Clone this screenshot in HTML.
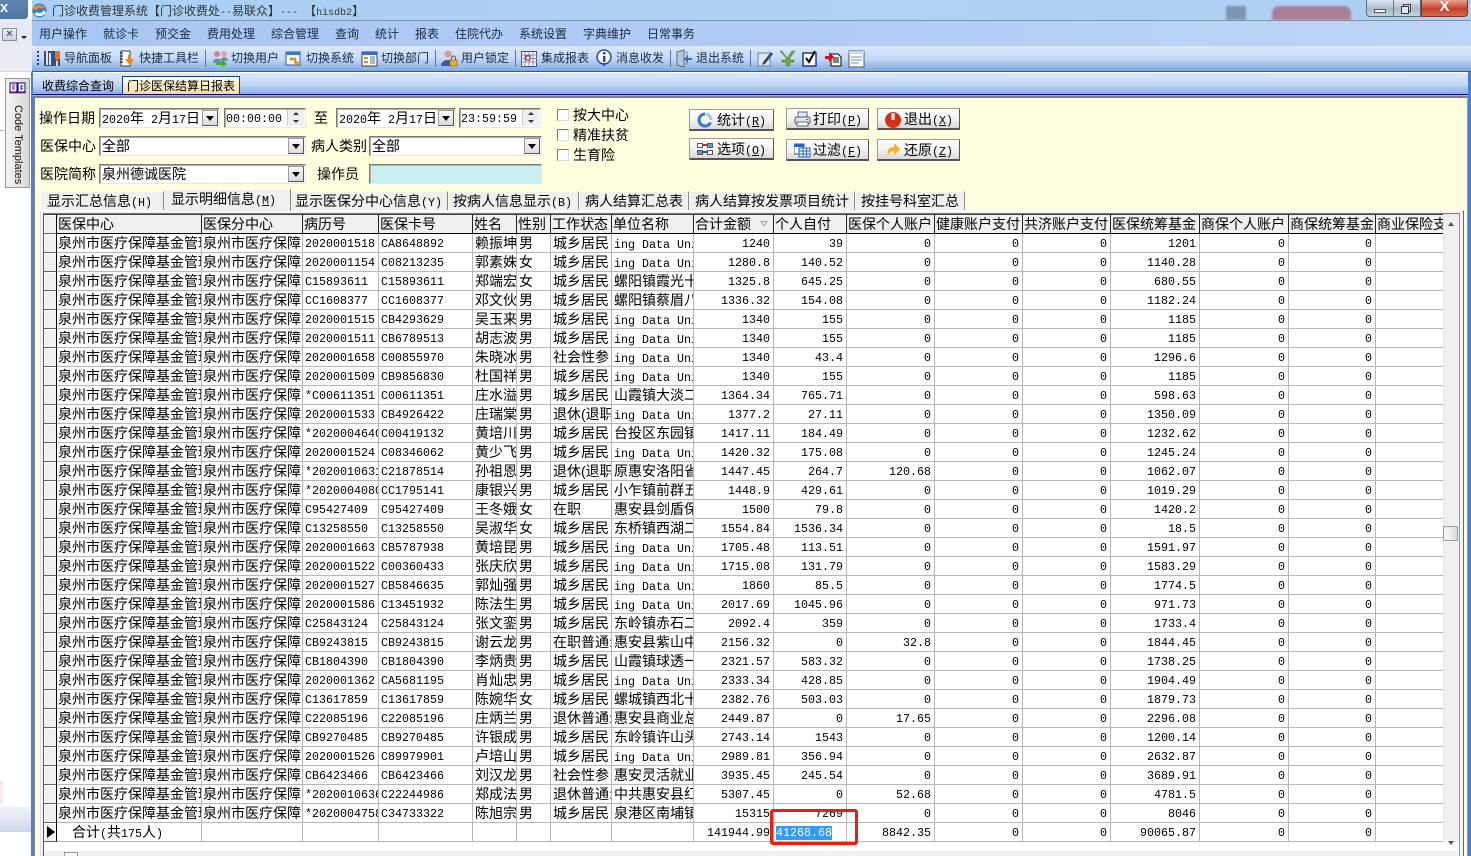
<!DOCTYPE html>
<html lang="zh"><head><meta charset="utf-8"><title>门诊收费管理系统</title>
<style>
*{box-sizing:border-box}
html,body{margin:0;padding:0;width:1471px;height:856px;overflow:hidden;background:#fff}
body{position:relative;font-family:"Liberation Sans","WenQuanYi Zen Hei","Noto Sans CJK SC",sans-serif;font-size:14px;color:#000}
.a{position:absolute}
.t{position:absolute;white-space:nowrap;line-height:20px;height:20px}
.m{font-family:"Liberation Mono",monospace;font-size:11.67px}
.s{font-size:12px;color:#1a2a44}
.f{position:absolute;background:#fff;border:1px solid #7a7a7a;border-right-color:#e8e8e0;border-bottom-color:#e8e8e0;box-shadow:inset 1px 1px 0 #b0b0b0;height:20px;line-height:18px;padding-left:2px;white-space:nowrap;overflow:hidden}
.dd{position:absolute;top:1px;right:1px;width:16px;height:16px;background:linear-gradient(#fafafa,#dcdcdc);border:1px solid #999;border-right-color:#555;border-bottom-color:#555}
.dd:after{content:"";position:absolute;left:3px;top:5px;border:4px solid transparent;border-top:5px solid #000;border-bottom:0}
.sp{position:absolute;top:1px;right:1px;width:17px;height:16px;background:#f0f0f0;border-left:1px solid #ccc}
.sp:before{content:"";position:absolute;left:5px;top:2px;border:3px solid transparent;border-bottom:3px solid #333;border-top:0}
.sp:after{content:"";position:absolute;left:5px;top:10px;border:3px solid transparent;border-top:3px solid #333;border-bottom:0}
.cb{position:absolute;left:557px;width:12px;height:12px;background:#fff;border:1px solid #777;border-right-color:#ddd;border-bottom-color:#ddd}
.b{position:absolute;height:22px;background:linear-gradient(#fff,#f2f2f2 55%,#d8d8d8);border:1px solid #999;border-right:1px solid #555;border-bottom:2px solid #555;border-radius:1px;line-height:20px;white-space:nowrap}
.b span.l{position:absolute;top:0}
.b svg{position:absolute;left:7px;top:2px}
.tab{position:absolute;top:191px;height:19px;background:#f0f0f0;border-top:1px solid #fff;border-right:1px solid #888;line-height:18px;padding-left:5px;white-space:nowrap}
table{position:absolute;left:44px;top:214px;border-collapse:separate;border-spacing:0;table-layout:fixed;width:1400px;background:#fff}
td,th{padding:0 0 0 2px;overflow:hidden;white-space:nowrap;height:19px;line-height:18px;font-weight:400;text-align:left;border-right:1px solid #b8b8b8;border-bottom:1px solid #b8b8b8;font-size:14px;vertical-align:top}
th{height:20px;background:#f0f0f0;border-right:1px solid #222;border-top:1px solid #444;border-bottom:1px solid #000;padding-left:1px}
td:first-child,th:first-child{background:#f0f0f0;border-right:1px solid #000;border-bottom:1px solid #666;box-shadow:inset 1px 1px 0 #fff;padding:0}
td:nth-child(4),td:nth-child(5){font-family:"Liberation Mono",monospace;font-size:11.67px;line-height:16px;padding-top:2px}
td:nth-child(n+10){font-family:"Liberation Mono",monospace;font-size:11.67px;text-align:right;line-height:16px;padding:2px 3px 0 0}
td i,td .m,td .sel{font-style:normal;font-family:"Liberation Mono",monospace;font-size:11.67px;line-height:0}
td:nth-child(2){padding-left:1px}td:nth-child(3){padding-left:1px}
</style></head><body>
<!-- title bar -->
<div class="a" style="left:32px;top:0;width:1439px;height:21px;background:linear-gradient(90deg,#a9cff3,#b0d2f4 60%,#acd0f2);border-bottom:1px solid #7e93ad"></div>
<div class="a" style="left:0;top:0;width:28px;height:19px;background:linear-gradient(#5f86ae,#4d76a0);border-bottom-right-radius:3px"></div>
<div class="a" style="left:0;top:-1px;font:700 15px 'Liberation Sans';color:#e8f0f8;line-height:18px">x</div>
<svg class="a" style="left:32px;top:3px" width="15" height="15" viewBox="0 0 15 15"><circle cx="7.5" cy="7.5" r="7" fill="#2f7fc9"/><path d="M1 5C4 1 10 1 13 4L10 6C8 4 5 5 3 8Z" fill="#f08a1d"/><path d="M14 10C11 14 5 14 2 11L5 9C7 11 10 10 12 7Z" fill="#f5f5f5"/></svg>
<div class="t s" style="left:52px;top:1px;color:#333">门诊收费管理系统【门诊收费处<span class="m" style="font-size:10px">--</span>易联众】<span class="m" style="font-size:10px">--- </span>【<span class="m" style="font-size:10px">hisdb2</span>】</div>
<div class="a" style="left:1226px;top:6px;width:20px;height:14px;background:#7a96b2;filter:blur(1px)"></div>
<div class="a" style="left:1272px;top:6px;width:79px;height:14px;background:#a87f96;border-radius:7px 7px 0 0;filter:blur(1px)"></div>
<div class="a" style="left:1366px;top:0;width:55px;height:17px;background:linear-gradient(#dfe9f3,#aab9c9 55%,#c6d3df);border:1px solid #5a6a7a;border-top:0;border-radius:0 0 0 4px"></div>
<div class="a" style="left:1393px;top:0;width:1px;height:17px;background:#66788a"></div>
<div class="a" style="left:1374px;top:9px;width:12px;height:4px;background:#fff;border:1px solid #556"></div>
<div class="a" style="left:1403px;top:4px;width:8px;height:8px;border:1px solid #334;background:#cfd9e3"></div>
<div class="a" style="left:1401px;top:6px;width:8px;height:8px;border:1px solid #334;background:#dfe7ef"></div>
<div class="a" style="left:1421px;top:0;width:47px;height:17px;background:linear-gradient(#e8a090,#c8402a 55%,#d06a50);border:1px solid #6a3a30;border-top:0;border-radius:0 0 4px 0"></div>
<div class="a" style="left:1421px;top:-2px;width:47px;text-align:center;font:700 15px/18px 'Liberation Sans';color:#fff">X</div>
<!-- left dock -->
<div class="a" style="left:0;top:19px;width:32px;height:26px;background:#e9e9f1"></div>
<div class="a" style="left:2px;top:28px;width:15px;height:13px;background:linear-gradient(#e8eef6,#c8d2de);border:1px solid #8a9098;text-align:center;font:700 11px/11px 'Liberation Sans';color:#556">×</div>
<div class="a" style="left:21px;top:36px;border:3px solid transparent;border-top:3px solid #222"></div>
<div class="a" style="left:0;top:45px;width:32px;height:27px;background:#ececf4;border-bottom:1px solid #d8d8e0"></div>
<div class="a" style="left:0;top:130px;width:4px;height:1px;background:#aaa"></div>
<div class="a" style="left:5px;top:78px;width:25px;height:110px;background:linear-gradient(90deg,#f4f4f4,#d8d8d8);border:1px solid #9a9a9a"></div>
<svg class="a" style="left:9px;top:82px" width="17" height="12" viewBox="0 0 17 12"><rect x="1" y="1" width="7" height="9" fill="#fff" stroke="#000080"/><rect x="9" y="1" width="7" height="9" fill="#fff" stroke="#000080"/><path d="M3 3h3M3 5h3M3 7h3" stroke="#800080"/><path d="M14 4h-2v3h2" stroke="#0000c0" fill="none"/><path d="M0 11h17" stroke="#c04040"/></svg>
<div class="a" style="left:8px;top:100px;width:18px;height:84px;font:11px/16px 'Liberation Sans';writing-mode:vertical-rl;color:#111;white-space:nowrap;padding-top:5px">Code Templates</div>
<div class="a" style="left:0;top:781px;width:3px;height:23px;background:#f6eeee"></div>
<div class="a" style="left:0;top:806px;width:31px;height:26px;background:linear-gradient(#f6f6fa,#d0d6ea)"></div>
<!-- menu -->
<div class="a" style="left:32px;top:21px;width:1439px;height:25px;background:linear-gradient(90deg,#a9c6f2,#b4cdf5 60%,#bdd5f6)"></div>
<div class="t s" style="left:39px;top:24px">用户操作</div><div class="t s" style="left:103px;top:24px">就诊卡</div><div class="t s" style="left:155px;top:24px">预交金</div><div class="t s" style="left:207px;top:24px">费用处理</div><div class="t s" style="left:271px;top:24px">综合管理</div><div class="t s" style="left:335px;top:24px">查询</div><div class="t s" style="left:375px;top:24px">统计</div><div class="t s" style="left:415px;top:24px">报表</div><div class="t s" style="left:455px;top:24px">住院代办</div><div class="t s" style="left:519px;top:24px">系统设置</div><div class="t s" style="left:583px;top:24px">字典维护</div><div class="t s" style="left:647px;top:24px">日常事务</div>
<!-- toolbar -->
<div class="a" style="left:32px;top:46px;width:1439px;height:26px;background:linear-gradient(#dce9fd,#c5d9f8 50%,#7fa8e0);border-bottom:1px solid #2e5c9c;border-radius:4px 0 0 0"></div>
<div class="a" style="left:37px;top:51px;width:2px;height:16px;background:repeating-linear-gradient(#1f3f7f 0 2px,transparent 2px 4px)"></div>
<div class="t s" style="left:64px;top:48px">导航面板</div><div class="t s" style="left:139px;top:48px">快捷工具栏</div><div class="t s" style="left:231px;top:48px">切换用户</div><div class="t s" style="left:306px;top:48px">切换系统</div><div class="t s" style="left:381px;top:48px">切换部门</div><div class="t s" style="left:461px;top:48px">用户锁定</div><div class="t s" style="left:541px;top:48px">集成报表</div><div class="t s" style="left:616px;top:48px">消息收发</div><div class="t s" style="left:696px;top:48px">退出系统</div>
<div class="a" style="left:205px;top:50px;width:1px;height:17px;background:#557aa8"></div><div class="a" style="left:435px;top:50px;width:1px;height:17px;background:#557aa8"></div><div class="a" style="left:515px;top:50px;width:1px;height:17px;background:#557aa8"></div><div class="a" style="left:670px;top:50px;width:1px;height:17px;background:#557aa8"></div><div class="a" style="left:750px;top:50px;width:1px;height:17px;background:#557aa8"></div>
<svg class="a" style="left:0;top:0" width="900" height="72">
<g transform="translate(44,50)"><rect x="0" y="1" width="16" height="15" fill="#35507f"/><path d="M3 1v14M6 3v12" stroke="#dfe6f2" stroke-width="2"/><path d="M11 1h5v7l-2 3h-1l-2-3z" fill="#f06a20"/><rect x="12" y="11" width="2" height="5" fill="#d0d8e4"/></g>
<g transform="translate(119,50)"><rect x="2" y="1" width="9" height="15" fill="#fff" stroke="#345"/><path d="M1 3h3M1 6h3M1 9h3M1 12h3" stroke="#111" stroke-width="1"/><path d="M9 5h3v4h3l-4 6-5-6h3z" fill="#ef7f1a"/></g>
<g transform="translate(212,50)"><circle cx="5" cy="4" r="3" fill="#c98b7a"/><circle cx="12" cy="4" r="3" fill="#e0a8a0"/><path d="M1 13c0-6 8-6 8 0zM8 11c1-5 8-5 8 0z" fill="#6c88bc"/><path d="M4 12h6v-3l5 5-5 3v-2H4z" fill="#3fae2a"/></g>
<g transform="translate(286,51)"><rect x="0" y="1" width="14" height="13" fill="#fff" stroke="#2a5ca8"/><rect x="0" y="1" width="14" height="3" fill="#3a78d0"/><path d="M4 7h6v4h3l-2 4-3-4h1V9H4z" fill="#f4a21f" stroke="#a06010" stroke-width=".5"/></g>
<g transform="translate(361,50)"><rect x="1" y="2" width="15" height="14" fill="#fff" stroke="#345"/><rect x="1" y="2" width="15" height="3" fill="#3a68b0"/><path d="M3 7h4v2H3zM3 11h4v2H3z" fill="#e88a20"/><path d="M9 7h5M9 9h5M9 11h5M9 13h5" stroke="#5070a0"/></g>
<g transform="translate(441,50)"><circle cx="7" cy="4" r="3.5" fill="#d8a080"/><path d="M0 16c0-8 13-8 13 0z" fill="#3c5aa0"/><rect x="9" y="10" width="7" height="6" fill="#e8b030" stroke="#806010" stroke-width=".6"/><path d="M10.500 10V8a2 2 0 014 0v2" fill="none" stroke="#555"/></g>
<g transform="translate(521,50)" fill="none"><rect x="0.500" y="1.500" width="15" height="15" fill="#fff" stroke="#3a4fa0"/><path d="M0 5h16M0 8.500h16M0 12h16M4 2v14M8 2v14M12 2v14" stroke="#7f86c8"/><rect x="5" y="6" width="4" height="4" fill="#fff" stroke="#a01010"/></g>
<g transform="translate(596,49)"><circle cx="8" cy="8" r="7" fill="#fff" stroke="#1f4fa8" stroke-width="1.500"/><path d="M6 14l2 4 2-4z" fill="#1f4fa8"/><rect x="7" y="3" width="2.500" height="2.500" fill="#1f4fa8"/><rect x="7" y="7" width="2.500" height="6" fill="#1f4fa8"/></g>
<g transform="translate(676,50)"><path d="M1 2l7-2v17l-7-2z" fill="#b8c6dc" stroke="#5a6a8a"/><path d="M9 2h2v12H9" fill="none" stroke="#889"/><path d="M16 8h-4V5l-4 4 4 4v-3h4z" fill="#1f78d8"/></g>
<g transform="translate(757,50)"><path d="M1 3h12v13H1z" fill="#e0e8f2" stroke="#6a80a0"/><path d="M6 12l8-10 2 2-8 10-3 1z" fill="#344a70"/></g>
<g transform="translate(780,50)"><path d="M2 1l5 7 5-7h3l-5 7v2h4v2h-4v4H6v-4H2v-2h4V8L0 1z" fill="#6fa838" stroke="#4a7a20" stroke-width=".5"/></g>
<g transform="translate(802,50)"><rect x="1" y="3" width="13" height="13" fill="#fff" stroke="#1a3a8a" stroke-width="1.500"/><path d="M4 8l3 4 6-11" fill="none" stroke="#000" stroke-width="2"/></g>
<g transform="translate(825,50)"><path d="M6 4h7l3 3v9H6z" fill="#fff" stroke="#000"/><path d="M8 8h6M8 10h6M8 12h6" stroke="#000"/><path d="M0 6h4V2l5 5-5 5V9H0z" fill="#e80808"/></g>
<g transform="translate(848,50)"><rect x="1" y="1" width="15" height="16" fill="#fff" stroke="#556"/><rect x="1" y="1" width="15" height="3" fill="#cfd6e6"/><path d="M3 7h11M3 10h11M3 13h8" stroke="#7a88c0"/></g>
</svg>
<!-- tab bar -->
<div class="a" style="left:32px;top:73px;width:1436px;height:22px;background:linear-gradient(#dce9fd,#c5d9f8 50%,#7fa8e0)"></div>
<div class="t" style="left:42px;top:76px;font-size:12px;line-height:20px">收费综合查询</div>
<div class="a" style="left:122px;top:76px;width:118px;height:19px;background:linear-gradient(#fffdf0,#fbd79a);border:1px solid #1f3f7f;border-bottom:0;text-align:center;font-size:12px;line-height:19px;white-space:nowrap">门诊医保结算日报表</div>
<div class="a" style="left:32px;top:94px;width:1436px;height:1px;background:#0000a0"></div>
<div class="a" style="left:32px;top:95px;width:1436px;height:1px;background:#f5b050"></div>
<!-- window side borders -->
<div class="a" style="left:31px;top:72px;width:2px;height:784px;background:#4a80d0"></div>
<div class="a" style="left:1468px;top:72px;width:3px;height:784px;background:#4a80d0"></div>
<!-- body -->
<div class="a" style="left:33px;top:96px;width:1435px;height:760px;background:#ffffe0;border:2px solid #808080;border-right:1px solid #9a9a90;border-bottom:0"></div>
<!-- form -->
<div class="t" style="left:39px;top:108px">操作日期</div>
<div class="f" style="left:99px;top:108px;width:121px"><span class="m">2020</span>年<span class="m">&nbsp;2</span>月<span class="m">17</span>日<div class="dd"></div></div>
<div class="f m" style="left:224px;top:108px;width:82px;padding-left:1px;line-height:20px">00:00:00<div class="sp"></div></div>
<div class="t" style="left:314px;top:108px">至</div>
<div class="f" style="left:336px;top:108px;width:120px"><span class="m">2020</span>年<span class="m">&nbsp;2</span>月<span class="m">17</span>日<div class="dd"></div></div>
<div class="f m" style="left:459px;top:108px;width:82px;padding-left:1px;line-height:20px">23:59:59<div class="sp"></div></div>
<div class="t" style="left:40px;top:136px">医保中心</div>
<div class="f" style="left:99px;top:136px;width:207px">全部<div class="dd"></div></div>
<div class="t" style="left:311px;top:136px">病人类别</div>
<div class="f" style="left:369px;top:136px;width:173px">全部<div class="dd"></div></div>
<div class="t" style="left:40px;top:164px">医院简称</div>
<div class="f" style="left:99px;top:164px;width:207px">泉州德诚医院<div class="dd"></div></div>
<div class="t" style="left:317px;top:164px">操作员</div>
<div class="f" style="left:369px;top:164px;width:173px;background:#c8f0ee"></div>
<div class="cb" style="top:109px"></div><div class="t" style="left:573px;top:105px">按大中心</div>
<div class="cb" style="top:129px"></div><div class="t" style="left:573px;top:125px">精准扶贫</div>
<div class="cb" style="top:149px"></div><div class="t" style="left:573px;top:145px">生育险</div>
<!-- buttons -->
<div class="b" style="left:689px;top:109px;width:85px"><svg width="16" height="16" viewBox="0 0 16 16"><path d="M8 2a6 6 0 105.500 8.500" fill="none" stroke="#3a78b8" stroke-width="3"/><path d="M9 2a6 6 0 015 6" fill="none" stroke="#a8c4e0" stroke-width="3"/></svg><span class="l" style="left:27px">统计<span class="m">(<u>R</u>)</span></span></div>
<div class="b" style="left:689px;top:138px;width:85px"><svg width="16" height="16" viewBox="0 0 16 16"><rect x="0.500" y="2.500" width="5" height="4" fill="#fff" stroke="#555"/><rect x="10.500" y="2.500" width="5" height="4" fill="#5aa0d8" stroke="#555"/><rect x="0.500" y="9.500" width="5" height="4" fill="#5aa0d8" stroke="#555"/><rect x="10.500" y="9.500" width="5" height="4" fill="#fff" stroke="#555"/><path d="M6 4h4" stroke="#c03020" stroke-width="2"/><path d="M6 11h4" stroke="#2050a0" stroke-width="2"/></svg><span class="l" style="left:27px">选项<span class="m">(<u>O</u>)</span></span></div>
<div class="b" style="left:786px;top:108px;width:83px"><svg width="17" height="16" viewBox="0 0 17 16"><rect x="4" y="1" width="9" height="6" fill="#dfeaf8" stroke="#667"/><rect x="1" y="6" width="15" height="7" rx="2" fill="#e4e4e4" stroke="#556"/><rect x="3" y="11" width="11" height="4" fill="#fff" stroke="#667"/><rect x="12" y="8" width="2" height="1" fill="#e03020"/></svg><span class="l" style="left:26px">打印<span class="m">(<u>P</u>)</span></span></div>
<div class="b" style="left:786px;top:139px;width:83px"><svg width="17" height="16" viewBox="0 0 17 16"><rect x="0" y="2" width="10" height="10" fill="#fff" stroke="#2a5ca8"/><rect x="0" y="2" width="10" height="3" fill="#2a68c0"/><rect x="5" y="6" width="11" height="9" fill="#fff" stroke="#2a5ca8"/><path d="M5 9h11M5 12h11M9 6v9M12.500 6v9" stroke="#2a68c0"/></svg><span class="l" style="left:26px">过滤<span class="m">(<u>F</u>)</span></span></div>
<div class="b" style="left:877px;top:108px;width:83px"><svg width="17" height="17" viewBox="0 0 17 17"><circle cx="8" cy="9" r="8" fill="#d83018"/><path d="M8 2v7" stroke="#fff" stroke-width="3"/></svg><span class="l" style="left:26px">退出<span class="m">(<u>X</u>)</span></span></div>
<div class="b" style="left:877px;top:139px;width:83px"><svg width="16" height="16" viewBox="0 0 16 16"><path d="M3 14C1 8 5 5 9 5V1l6 6-6 6V9C6 9 4 10 3 14z" fill="#f4b020"/></svg><span class="l" style="left:26px">还原<span class="m">(<u>Z</u>)</span></span></div>
<!-- sub tabs -->
<div class="a" style="left:40px;top:210px;width:1424px;height:646px;background:#f4f4f4;border-top:1px solid #fff;border-left:1px solid #ddd;border-right:1px solid #666"></div>
<div class="tab" style="left:42px;width:122px">显示汇总信息<span class="m">(H)</span></div>
<div class="tab" style="left:164px;width:127px;top:189px;height:22px;background:#f0f0f0;z-index:1;padding-left:7px">显示明细信息<span class="m">(<u>M</u>)</span></div>
<div class="tab" style="left:291px;width:157px;padding-left:4px">显示医保分中心信息<span class="m">(Y)</span></div>
<div class="tab" style="left:449px;width:130px;padding-left:4px">按病人信息显示<span class="m">(B)</span></div>
<div class="tab" style="left:580px;width:109px">病人结算汇总表</div>
<div class="tab" style="left:690px;width:165px">病人结算按发票项目统计</div>
<div class="tab" style="left:856px;width:109px">按挂号科室汇总</div>
<!-- grid frame -->
<div class="a" style="left:43px;top:213px;width:1417px;height:643px;background:#fff;border-left:1px solid #555;border-top:1px solid #777;border-right:1px solid #999"></div>
<table><colgroup><col style="width:13px"><col style="width:145px"><col style="width:101px"><col style="width:76px"><col style="width:94px"><col style="width:44px"><col style="width:34px"><col style="width:61px"><col style="width:82px"><col style="width:80px"><col style="width:73px"><col style="width:88px"><col style="width:88px"><col style="width:88px"><col style="width:89px"><col style="width:89px"><col style="width:87px"><col style="width:68px"></colgroup>
<tr><th></th><th>医保中心</th><th>医保分中心</th><th>病历号</th><th>医保卡号</th><th>姓名</th><th>性别</th><th>工作状态</th><th>单位名称</th><th>合计金额</th><th>个人自付</th><th>医保个人账户</th><th>健康账户支付</th><th>共济账户支付</th><th>医保统筹基金</th><th>商保个人账户</th><th>商保统筹基金</th><th>商业保险支付</th></tr>
<tr><td></td><td>泉州市医疗保障基金管理</td><td>泉州市医疗保障</td><td>2020001518</td><td>CA8648892</td><td>赖振坤</td><td>男</td><td>城乡居民</td><td><i>ing Data Uni</i></td><td>1240</td><td>39</td><td>0</td><td>0</td><td>0</td><td>1201</td><td>0</td><td>0</td><td></td></tr>
<tr><td></td><td>泉州市医疗保障基金管理</td><td>泉州市医疗保障</td><td>2020001154</td><td>C08213235</td><td>郭素姝</td><td>女</td><td>城乡居民</td><td><i>ing Data Uni</i></td><td>1280.8</td><td>140.52</td><td>0</td><td>0</td><td>0</td><td>1140.28</td><td>0</td><td>0</td><td></td></tr>
<tr><td></td><td>泉州市医疗保障基金管理</td><td>泉州市医疗保障</td><td>C15893611</td><td>C15893611</td><td>郑端宏</td><td>女</td><td>城乡居民</td><td>螺阳镇霞光十</td><td>1325.8</td><td>645.25</td><td>0</td><td>0</td><td>0</td><td>680.55</td><td>0</td><td>0</td><td></td></tr>
<tr><td></td><td>泉州市医疗保障基金管理</td><td>泉州市医疗保障</td><td>CC1608377</td><td>CC1608377</td><td>邓文伙</td><td>男</td><td>城乡居民</td><td>螺阳镇蔡眉八</td><td>1336.32</td><td>154.08</td><td>0</td><td>0</td><td>0</td><td>1182.24</td><td>0</td><td>0</td><td></td></tr>
<tr><td></td><td>泉州市医疗保障基金管理</td><td>泉州市医疗保障</td><td>2020001515</td><td>CB4293629</td><td>吴玉来</td><td>男</td><td>城乡居民</td><td><i>ing Data Uni</i></td><td>1340</td><td>155</td><td>0</td><td>0</td><td>0</td><td>1185</td><td>0</td><td>0</td><td></td></tr>
<tr><td></td><td>泉州市医疗保障基金管理</td><td>泉州市医疗保障</td><td>2020001511</td><td>CB6789513</td><td>胡志波</td><td>男</td><td>城乡居民</td><td><i>ing Data Uni</i></td><td>1340</td><td>155</td><td>0</td><td>0</td><td>0</td><td>1185</td><td>0</td><td>0</td><td></td></tr>
<tr><td></td><td>泉州市医疗保障基金管理</td><td>泉州市医疗保障</td><td>2020001658</td><td>C00855970</td><td>朱晓冰</td><td>男</td><td>社会性参</td><td><i>ing Data Uni</i></td><td>1340</td><td>43.4</td><td>0</td><td>0</td><td>0</td><td>1296.6</td><td>0</td><td>0</td><td></td></tr>
<tr><td></td><td>泉州市医疗保障基金管理</td><td>泉州市医疗保障</td><td>2020001509</td><td>CB9856830</td><td>杜国祥</td><td>男</td><td>城乡居民</td><td><i>ing Data Uni</i></td><td>1340</td><td>155</td><td>0</td><td>0</td><td>0</td><td>1185</td><td>0</td><td>0</td><td></td></tr>
<tr><td></td><td>泉州市医疗保障基金管理</td><td>泉州市医疗保障</td><td>*C00611351</td><td>C00611351</td><td>庄水溢</td><td>男</td><td>城乡居民</td><td>山霞镇大淡二</td><td>1364.34</td><td>765.71</td><td>0</td><td>0</td><td>0</td><td>598.63</td><td>0</td><td>0</td><td></td></tr>
<tr><td></td><td>泉州市医疗保障基金管理</td><td>泉州市医疗保障</td><td>2020001533</td><td>CB4926422</td><td>庄瑞棠</td><td>男</td><td>退休(退职</td><td><i>ing Data Uni</i></td><td>1377.2</td><td>27.11</td><td>0</td><td>0</td><td>0</td><td>1350.09</td><td>0</td><td>0</td><td></td></tr>
<tr><td></td><td>泉州市医疗保障基金管理</td><td>泉州市医疗保障</td><td>*20200046400</td><td>C00419132</td><td>黄培川</td><td>男</td><td>城乡居民</td><td>台投区东园镇</td><td>1417.11</td><td>184.49</td><td>0</td><td>0</td><td>0</td><td>1232.62</td><td>0</td><td>0</td><td></td></tr>
<tr><td></td><td>泉州市医疗保障基金管理</td><td>泉州市医疗保障</td><td>2020001524</td><td>C08346062</td><td>黄少飞</td><td>男</td><td>城乡居民</td><td><i>ing Data Uni</i></td><td>1420.32</td><td>175.08</td><td>0</td><td>0</td><td>0</td><td>1245.24</td><td>0</td><td>0</td><td></td></tr>
<tr><td></td><td>泉州市医疗保障基金管理</td><td>泉州市医疗保障</td><td>*20200106310</td><td>C21878514</td><td>孙祖恩</td><td>男</td><td>退休(退职</td><td>原惠安洛阳省</td><td>1447.45</td><td>264.7</td><td>120.68</td><td>0</td><td>0</td><td>1062.07</td><td>0</td><td>0</td><td></td></tr>
<tr><td></td><td>泉州市医疗保障基金管理</td><td>泉州市医疗保障</td><td>*20200040800</td><td>CC1795141</td><td>康银兴</td><td>男</td><td>城乡居民</td><td>小乍镇前群五</td><td>1448.9</td><td>429.61</td><td>0</td><td>0</td><td>0</td><td>1019.29</td><td>0</td><td>0</td><td></td></tr>
<tr><td></td><td>泉州市医疗保障基金管理</td><td>泉州市医疗保障</td><td>C95427409</td><td>C95427409</td><td>王冬娥</td><td>女</td><td>在职</td><td>惠安县剑盾保</td><td>1500</td><td>79.8</td><td>0</td><td>0</td><td>0</td><td>1420.2</td><td>0</td><td>0</td><td></td></tr>
<tr><td></td><td>泉州市医疗保障基金管理</td><td>泉州市医疗保障</td><td>C13258550</td><td>C13258550</td><td>吴淑华</td><td>女</td><td>城乡居民</td><td>东桥镇西湖二</td><td>1554.84</td><td>1536.34</td><td>0</td><td>0</td><td>0</td><td>18.5</td><td>0</td><td>0</td><td></td></tr>
<tr><td></td><td>泉州市医疗保障基金管理</td><td>泉州市医疗保障</td><td>2020001663</td><td>CB5787938</td><td>黄培昆</td><td>男</td><td>城乡居民</td><td><i>ing Data Uni</i></td><td>1705.48</td><td>113.51</td><td>0</td><td>0</td><td>0</td><td>1591.97</td><td>0</td><td>0</td><td></td></tr>
<tr><td></td><td>泉州市医疗保障基金管理</td><td>泉州市医疗保障</td><td>2020001522</td><td>C00360433</td><td>张庆欣</td><td>男</td><td>城乡居民</td><td><i>ing Data Uni</i></td><td>1715.08</td><td>131.79</td><td>0</td><td>0</td><td>0</td><td>1583.29</td><td>0</td><td>0</td><td></td></tr>
<tr><td></td><td>泉州市医疗保障基金管理</td><td>泉州市医疗保障</td><td>2020001527</td><td>CB5846635</td><td>郭灿强</td><td>男</td><td>城乡居民</td><td><i>ing Data Uni</i></td><td>1860</td><td>85.5</td><td>0</td><td>0</td><td>0</td><td>1774.5</td><td>0</td><td>0</td><td></td></tr>
<tr><td></td><td>泉州市医疗保障基金管理</td><td>泉州市医疗保障</td><td>2020001586</td><td>C13451932</td><td>陈法生</td><td>男</td><td>城乡居民</td><td><i>ing Data Uni</i></td><td>2017.69</td><td>1045.96</td><td>0</td><td>0</td><td>0</td><td>971.73</td><td>0</td><td>0</td><td></td></tr>
<tr><td></td><td>泉州市医疗保障基金管理</td><td>泉州市医疗保障</td><td>C25843124</td><td>C25843124</td><td>张文銮</td><td>男</td><td>城乡居民</td><td>东岭镇赤石二</td><td>2092.4</td><td>359</td><td>0</td><td>0</td><td>0</td><td>1733.4</td><td>0</td><td>0</td><td></td></tr>
<tr><td></td><td>泉州市医疗保障基金管理</td><td>泉州市医疗保障</td><td>CB9243815</td><td>CB9243815</td><td>谢云龙</td><td>男</td><td>在职普通:</td><td>惠安县紫山中</td><td>2156.32</td><td>0</td><td>32.8</td><td>0</td><td>0</td><td>1844.45</td><td>0</td><td>0</td><td></td></tr>
<tr><td></td><td>泉州市医疗保障基金管理</td><td>泉州市医疗保障</td><td>CB1804390</td><td>CB1804390</td><td>李炳贵</td><td>男</td><td>城乡居民</td><td>山霞镇球透一</td><td>2321.57</td><td>583.32</td><td>0</td><td>0</td><td>0</td><td>1738.25</td><td>0</td><td>0</td><td></td></tr>
<tr><td></td><td>泉州市医疗保障基金管理</td><td>泉州市医疗保障</td><td>2020001362</td><td>CA5681195</td><td>肖灿忠</td><td>男</td><td>城乡居民</td><td><i>ing Data Uni</i></td><td>2333.34</td><td>428.85</td><td>0</td><td>0</td><td>0</td><td>1904.49</td><td>0</td><td>0</td><td></td></tr>
<tr><td></td><td>泉州市医疗保障基金管理</td><td>泉州市医疗保障</td><td>C13617859</td><td>C13617859</td><td>陈婉华</td><td>女</td><td>城乡居民</td><td>螺城镇西北十</td><td>2382.76</td><td>503.03</td><td>0</td><td>0</td><td>0</td><td>1879.73</td><td>0</td><td>0</td><td></td></tr>
<tr><td></td><td>泉州市医疗保障基金管理</td><td>泉州市医疗保障</td><td>C22085196</td><td>C22085196</td><td>庄炳兰</td><td>男</td><td>退休普通:</td><td>惠安县商业总</td><td>2449.87</td><td>0</td><td>17.65</td><td>0</td><td>0</td><td>2296.08</td><td>0</td><td>0</td><td></td></tr>
<tr><td></td><td>泉州市医疗保障基金管理</td><td>泉州市医疗保障</td><td>CB9270485</td><td>CB9270485</td><td>许银成</td><td>男</td><td>城乡居民</td><td>东岭镇许山头</td><td>2743.14</td><td>1543</td><td>0</td><td>0</td><td>0</td><td>1200.14</td><td>0</td><td>0</td><td></td></tr>
<tr><td></td><td>泉州市医疗保障基金管理</td><td>泉州市医疗保障</td><td>2020001526</td><td>C89979901</td><td>卢培山</td><td>男</td><td>城乡居民</td><td><i>ing Data Uni</i></td><td>2989.81</td><td>356.94</td><td>0</td><td>0</td><td>0</td><td>2632.87</td><td>0</td><td>0</td><td></td></tr>
<tr><td></td><td>泉州市医疗保障基金管理</td><td>泉州市医疗保障</td><td>CB6423466</td><td>CB6423466</td><td>刘汉龙</td><td>男</td><td>社会性参</td><td>惠安灵活就业</td><td>3935.45</td><td>245.54</td><td>0</td><td>0</td><td>0</td><td>3689.91</td><td>0</td><td>0</td><td></td></tr>
<tr><td></td><td>泉州市医疗保障基金管理</td><td>泉州市医疗保障</td><td>*20200106360</td><td>C22244986</td><td>郑成法</td><td>男</td><td>退休普通:</td><td>中共惠安县红</td><td>5307.45</td><td>0</td><td>52.68</td><td>0</td><td>0</td><td>4781.5</td><td>0</td><td>0</td><td></td></tr>
<tr><td></td><td>泉州市医疗保障基金管理</td><td>泉州市医疗保障</td><td>*20200047580</td><td>C34733322</td><td>陈旭宗</td><td>男</td><td>城乡居民</td><td>泉港区南埔镇</td><td>15315</td><td>7269</td><td>0</td><td>0</td><td>0</td><td>8046</td><td>0</td><td>0</td><td></td></tr>
<tr><td style="position:relative"><div class="a" style="left:3px;top:3px;border:6px solid transparent;border-left:8px solid #000;border-right:0"></div></td><td style="padding-left:15px">合计<span class="m">(</span>共<span class="m">175</span>人<span class="m">)</span></td><td></td><td></td><td></td><td></td><td></td><td></td><td></td><td>141944.99</td><td style="text-align:left;padding-left:2px"><span class="sel" style="background:#3399ff;color:#fff">41268.68</span></td><td>8842.35</td><td>0</td><td>0</td><td>90065.87</td><td>0</td><td>0</td><td></td></tr>
</table>
<!-- sort glyph -->
<div class="a" style="left:760px;top:221px;border:4px solid transparent;border-top:6px solid #aaa;border-bottom:0"></div>
<div class="a" style="left:762px;top:222px;border:2px solid transparent;border-top:3px solid #f0f0f0;border-bottom:0"></div>
<!-- scrollbar -->
<div class="a" style="left:1443px;top:214px;width:16px;height:628px;background:#f0f0f0;border-left:1px solid #e4e4e4"></div>
<div class="a" style="left:1448px;top:222px;border:3px solid transparent;border-bottom:4px solid #555;border-top:0"></div>
<div class="a" style="left:1448px;top:841px;border:3px solid transparent;border-top:4px solid #555;border-bottom:0"></div>
<div class="a" style="left:1443px;top:526px;width:15px;height:15px;background:linear-gradient(90deg,#fafafa,#dcdcdc);border:1px solid #999;border-radius:2px"></div>
<div class="a" style="left:44px;top:851px;width:1415px;height:5px;background:#f0f0f0"></div>
<div class="a" style="left:64px;top:852px;width:14px;height:4px;background:#fafafa;border:1px solid #999;border-bottom:0"></div>
<!-- red box -->
<div class="a" style="left:770px;top:809px;width:88px;height:36px;border:3px solid #f01c10;border-radius:3px"></div>
</body></html>
